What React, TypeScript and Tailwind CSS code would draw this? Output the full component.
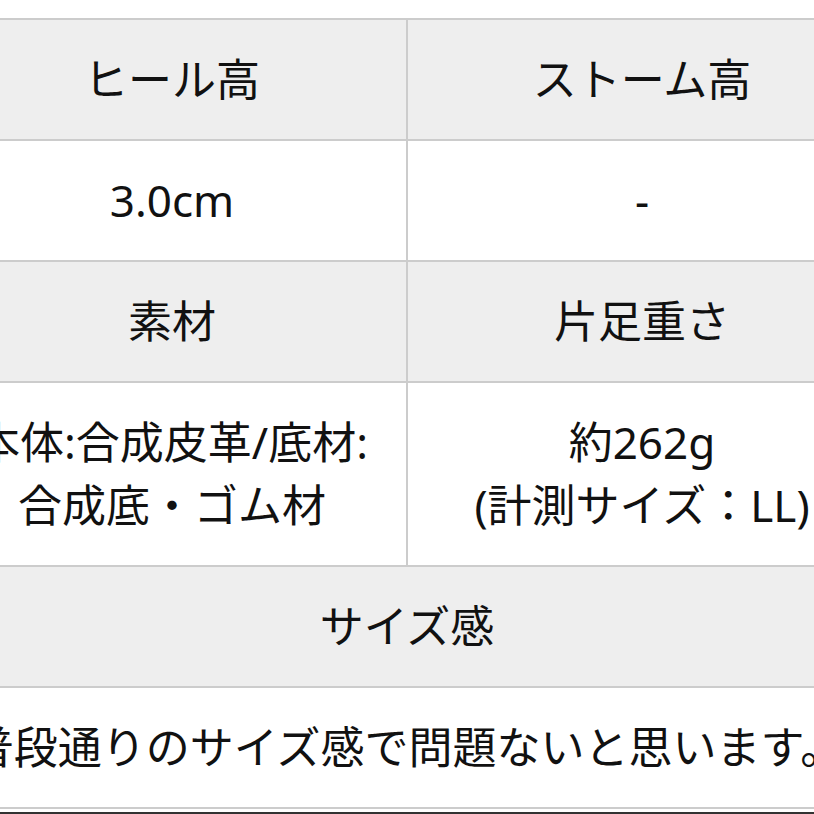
import React from "react";

const head = "bg-[#eeeeee] flex items-center justify-center h-[119px]";
const cell = "bg-white flex items-center justify-center text-center";

export default function App() {
  return (
    <div
      className="w-[814px] h-[814px] overflow-hidden bg-white text-[#111] text-[44px] font-normal leading-[63px]"
      style={{ fontFamily: '"Noto Sans", "Noto Sans CJK JP", sans-serif' }}
    >
      <div className="pt-[18px] ml-[-64px] w-[942px]">
        <div className="grid grid-cols-2 gap-[2px] p-[2px] bg-[#cccccc]">
          <div className={head}>ヒール高</div>
          <div className={head}>ストーム高</div>

          <div className={`${cell} h-[119px]`}>3.0cm</div>
          <div className={`${cell} h-[119px]`}>-</div>

          <div className={head}>素材</div>
          <div className={head}>片足重さ</div>

          <div className={`${cell} h-[182px]`}>
            <div>
              本体:合成皮革/底材:
              <br />
              合成底・ゴム材
            </div>
          </div>
          <div className={`${cell} h-[182px]`}>
            <div>
              約262g
              <br />
              (計測サイズ：LL)
            </div>
          </div>

          <div className={`${head} col-span-2`}>サイズ感</div>
          <div className={`${cell} h-[119px] col-span-2 whitespace-nowrap`}>
            普段通りのサイズ感で問題ないと思います。
          </div>
        </div>
      </div>
      <div className="mt-[3px] h-[2px] bg-[#333333]" />
    </div>
  );
}
